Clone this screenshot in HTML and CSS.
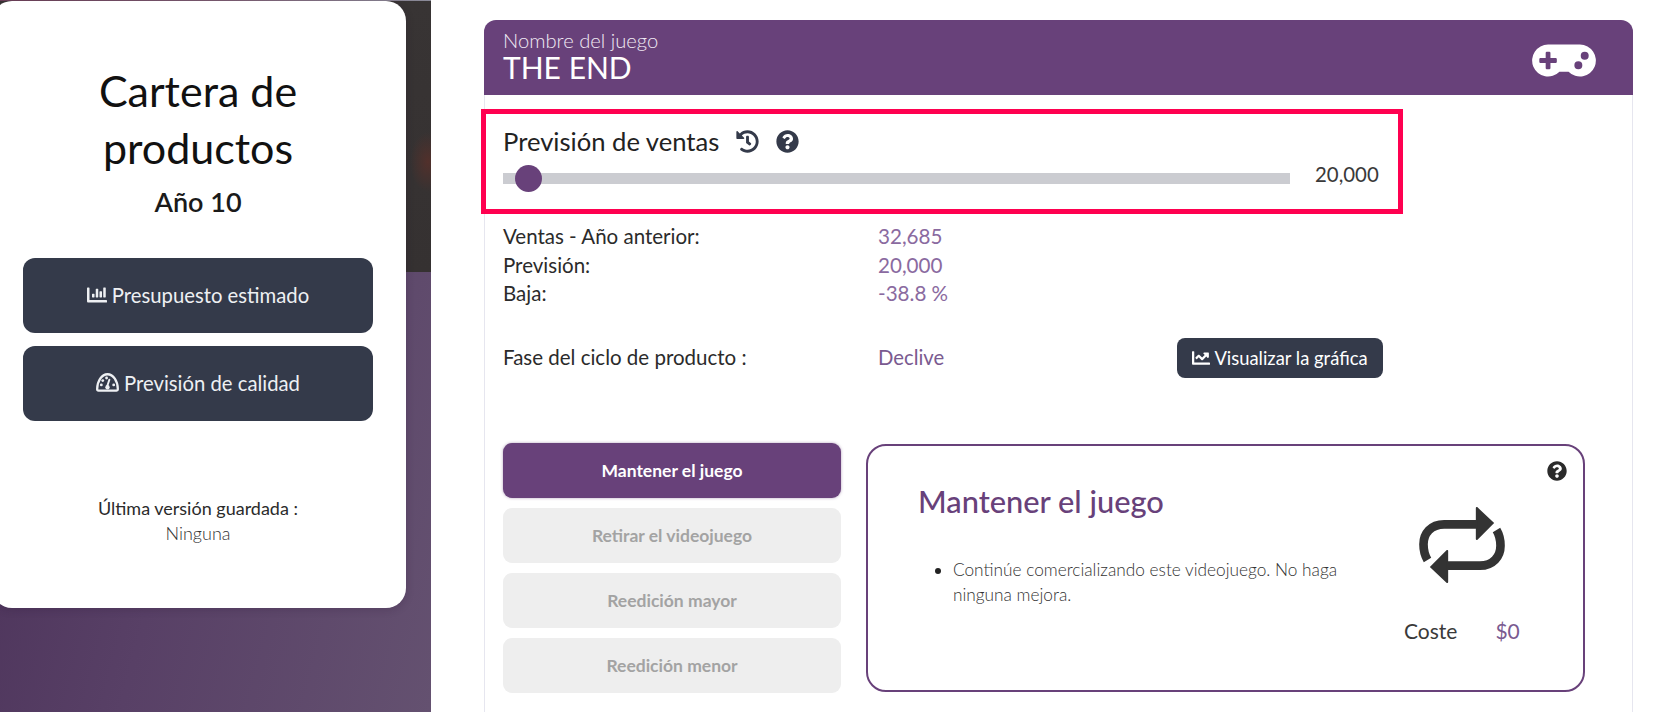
FILE: index.html
```html
<!DOCTYPE html>
<html lang="es">
<head>
<meta charset="utf-8">
<title>Cartera de productos</title>
<link rel="stylesheet" href="styles.css">
</head>
<body>
<div class="page">
  <aside class="side">
    <div class="side-panel">
      <h1 class="side-title">Cartera de productos</h1>
      <div class="side-year">Año 10</div>
      <button class="side-btn">
        <svg class="ico-18" viewBox="0 0 512 512"><path fill="currentColor" d="M332.8 320h38.4c6.4 0 12.8-6.4 12.8-12.8V172.8c0-6.4-6.4-12.8-12.8-12.8h-38.4c-6.4 0-12.8 6.4-12.8 12.8v134.4c0 6.4 6.4 12.8 12.8 12.8zm96 0h38.4c6.4 0 12.8-6.4 12.8-12.8V76.8c0-6.4-6.4-12.8-12.8-12.8h-38.4c-6.4 0-12.8 6.4-12.8 12.8v230.4c0 6.4 6.4 12.8 12.8 12.8zm-288 0h38.4c6.4 0 12.8-6.4 12.8-12.8v-70.4c0-6.4-6.4-12.8-12.8-12.8h-38.4c-6.4 0-12.8 6.4-12.8 12.8v70.4c0 6.4 6.4 12.8 12.8 12.8zm96 0h38.4c6.4 0 12.8-6.4 12.8-12.8V108.8c0-6.4-6.4-12.8-12.8-12.8h-38.4c-6.4 0-12.8 6.4-12.8 12.8v198.4c0 6.4 6.4 12.8 12.8 12.8zM496 384H64V80c0-8.84-7.16-16-16-16H16C7.16 64 0 71.16 0 80v336c0 17.67 14.33 32 32 32h464c8.84 0 16-7.16 16-16v-32c0-8.84-7.16-16-16-16z"/></svg>
        <span>Presupuesto estimado</span>
      </button>
      <button class="side-btn side-btn-next">
        <svg class="ico-gauge" viewBox="0 0 24 20"><path fill="none" stroke="currentColor" stroke-width="2.4" stroke-linejoin="round" d="M2.500 18.500c-1 0-1.400-.5-1.400-1.300C1.100 8.500 6 1.300 12 1.300S22.900 8.500 22.900 17.200c0 .8-.4 1.300-1.400 1.300z"/><path fill="none" stroke="currentColor" stroke-width="2" stroke-linecap="round" d="M11.500 14.500L14 7"/><g fill="currentColor"><circle cx="11" cy="5.300" r="1.500"/><circle cx="7" cy="8" r="1.500"/><circle cx="5.500" cy="12.500" r="1.500"/><circle cx="18.500" cy="12.500" r="1.500"/><circle cx="12" cy="15" r="2.300"/></g></svg>
        <span>Previsión de calidad</span>
      </button>
      <div class="saved-label">Última versión guardada :</div>
      <div class="saved-value">Ninguna</div>
    </div>
  </aside>

  <main class="main">
    <section class="card">
      <header class="card-head">
        <div>
          <div class="head-label">Nombre del juego</div>
          <div class="head-name">THE END</div>
        </div>
        <svg class="ico-pad" viewBox="0 0 640 512"><path fill="#fff" d="M480.07 96H160a160 160 0 1 0 114.24 272h91.52A160 160 0 1 0 480.07 96zM248 268a12 12 0 0 1-12 12h-52v52a12 12 0 0 1-12 12h-24a12 12 0 0 1-12-12v-52H84a12 12 0 0 1-12-12v-24a12 12 0 0 1 12-12h52v-52a12 12 0 0 1 12-12h24a12 12 0 0 1 12 12v52h52a12 12 0 0 1 12 12zm216 76a40 40 0 1 1 40-40 40 40 0 0 1-40 40zm64-96a40 40 0 1 1 40-40 40 40 0 0 1-40 40z"/></svg>
      </header>

      <div class="card-body">
        <div class="forecast">
          <div class="highlight"></div>
          <div class="forecast-title">
            <span>Previsión de ventas</span>
            <svg class="ico-history" viewBox="0 0 512 512"><path fill="#343a4a" d="M504 255.531c.253 136.64-111.18 248.372-247.82 248.468-59.015.042-113.223-20.53-155.822-54.911-11.077-8.94-11.905-25.541-1.839-35.607l11.267-11.267c8.609-8.609 22.353-9.551 31.891-1.984C173.062 425.135 212.781 440 256 440c101.705 0 184-82.311 184-184 0-101.705-82.311-184-184-184-48.814 0-93.149 18.969-126.068 49.932l50.754 50.754c10.08 10.08 2.941 27.314-11.313 27.314H24c-8.837 0-16-7.163-16-16V38.627c0-14.254 17.234-21.393 27.314-11.314l49.372 49.372C129.209 34.136 189.552 8 256 8c136.81 0 247.747 110.78 248 247.531zm-180.912 78.784l9.823-12.63c8.138-10.463 6.253-25.542-4.21-33.679L288 256.349V152c0-13.255-10.745-24-24-24h-16c-13.255 0-24 10.745-24 24v135.651l65.409 50.874c10.463 8.137 25.541 6.253 33.679-4.21z"/></svg>
            <svg class="ico-help" viewBox="0 0 512 512"><path fill="#343a4a" d="M504 256c0 136.997-111.043 248-248 248S8 392.997 8 256C8 119.083 119.043 8 256 8s248 111.083 248 248zM262.655 90c-54.497 0-89.255 22.957-116.549 63.758-3.536 5.286-2.353 12.415 2.715 16.258l34.699 26.31c5.205 3.947 12.621 3.008 16.665-2.122 17.864-22.658 30.113-35.797 57.303-35.797 20.429 0 45.698 13.148 45.698 32.958 0 14.976-12.363 22.667-32.534 33.976C247.128 238.528 216 254.941 216 296v4c0 6.627 5.373 12 12 12h56c6.627 0 12-5.373 12-12v-1.333c0-28.462 83.186-29.647 83.186-106.667 0-58.002-60.165-102-116.531-102zM256 338c-25.365 0-46 20.635-46 46 0 25.364 20.635 46 46 46s46-20.636 46-46c0-25.365-20.635-46-46-46z"/></svg>
          </div>
          <div class="slider-row">
            <div class="track"><div class="thumb"></div></div>
            <div class="slider-value">20,000</div>
          </div>
        </div>

        <div class="stats">
          <div class="stat-label">Ventas - Año anterior:</div><div class="stat-value">32,685</div>
          <div class="stat-label">Previsión:</div><div class="stat-value">20,000</div>
          <div class="stat-label">Baja:</div><div class="stat-value">-38.8 %</div>
        </div>

        <div class="phase">
          <div class="stat-label phase-label">Fase del ciclo de producto :</div>
          <div class="phase-value">Declive</div>
          <button class="chart-btn">
            <svg class="ico-line" viewBox="0 0 512 512"><path fill="currentColor" d="M496 384H64V80c0-8.84-7.16-16-16-16H16C7.16 64 0 71.16 0 80v336c0 17.67 14.33 32 32 32h464c8.84 0 16-7.16 16-16v-32c0-8.84-7.16-16-16-16zM464 96H345.94c-21.38 0-32.09 25.85-16.97 40.97l32.4 32.4L288 242.75l-73.37-73.37c-12.5-12.5-32.76-12.5-45.25 0l-68.69 68.69c-6.25 6.25-6.25 16.38 0 22.63l22.62 22.62c6.25 6.25 16.38 6.25 22.63 0L192 237.25l73.37 73.37c12.5 12.5 32.76 12.5 45.25 0l96-96 32.4 32.4c15.12 15.12 40.97 4.41 40.97-16.97V112c0-8.84-7.16-16-16-16z"/></svg>
            <span>Visualizar la gráfica</span>
          </button>
        </div>

        <div class="decision">
          <div class="options">
            <button class="option option-active">Mantener el juego</button>
            <button class="option">Retirar el videojuego</button>
            <button class="option">Reedición mayor</button>
            <button class="option">Reedición menor</button>
          </div>
          <div class="detail">
            <svg class="ico-detail-help" viewBox="0 0 512 512"><path fill="#2b2b2b" d="M504 256c0 136.997-111.043 248-248 248S8 392.997 8 256C8 119.083 119.043 8 256 8s248 111.083 248 248zM262.655 90c-54.497 0-89.255 22.957-116.549 63.758-3.536 5.286-2.353 12.415 2.715 16.258l34.699 26.31c5.205 3.947 12.621 3.008 16.665-2.122 17.864-22.658 30.113-35.797 57.303-35.797 20.429 0 45.698 13.148 45.698 32.958 0 14.976-12.363 22.667-32.534 33.976C247.128 238.528 216 254.941 216 296v4c0 6.627 5.373 12 12 12h56c6.627 0 12-5.373 12-12v-1.333c0-28.462 83.186-29.647 83.186-106.667 0-58.002-60.165-102-116.531-102zM256 338c-25.365 0-46 20.635-46 46 0 25.364 20.635 46 46 46s46-20.636 46-46c0-25.365-20.635-46-46-46z"/></svg>
            <div class="detail-text">
              <h2 class="detail-title">Mantener el juego</h2>
              <ul class="detail-list">
                <li>Continúe comercializando este videojuego. No haga ninguna mejora.</li>
              </ul>
            </div>
            <div class="detail-side">
              <svg class="ico-repeat" viewBox="0 0 257 228"><g fill="#333"><path d="M170 3c0-3 3-4 5-2l50 47-50 50c-2 2-5 1-5-2z"/><path d="M87 225c0 3-3 4-5 2L32 180l50-50c2-2 5-1 5 2z"/></g><g fill="none" stroke="#333" stroke-width="26"><path d="M175 52H75C35 52 13 80 13 112c0 18 3 32 12 47"/><path d="M82 176H182c40 0 62-28 62-60 0-18-3-32-12-47"/></g></svg>
              <div class="cost"><span>Coste</span><span class="cost-value">$0</span></div>
            </div>
          </div>
        </div>
      </div>
    </section>
  </main>
</div>
</body>
</html>
```
FILE: styles.css
```css
* { box-sizing: border-box; }
html, body { margin: 0; height: 100%; overflow: hidden; background: #fff; }
body { font-family: "Lato", "Noto Sans", sans-serif; color: #2b2b2b; }
button { font-family: inherit; border: 0; cursor: pointer; }
svg { display: block; flex: none; }

.page { display: flex; height: 712px; overflow: hidden; }

.side {
  width: 431px;
  flex: none;
  background:
    linear-gradient(90deg, #6b3f57, #7a5a70 50%, #8a8a98) 0 0 / 100% 1px no-repeat,
    radial-gradient(ellipse 18px 30px at 428px 162px, #52302b, rgba(60,50,50,0) 100%) 0 0 / 100% 272px no-repeat,
    linear-gradient(#383434, #353131) 0 0 / 100% 272px no-repeat,
    linear-gradient(105deg, #4b3259 10%, #584066 50%, #645170 100%);
}
.side-panel {
  width: 414px;
  height: 607px;
  margin: 1px 0 0 -8px;
  padding: 60.5px 33px 0 31px;
  background: #fff;
  border-radius: 20px;
  text-align: center;
  box-shadow: 0 2px 8px rgba(40, 20, 50, .2);
}
.side-title { margin: 0; font-size: 43px; line-height: 57px; font-weight: 400; color: #111; }
.side-year { margin-top: 8.5px; font-size: 27px; line-height: 36px; font-weight: 600; color: #1a1a1a; }
.side-btn {
  display: flex; align-items: center; justify-content: center; gap: 5px;
  width: 350px; height: 75px; margin-top: 37.5px;
  padding-bottom: 2px;
  background: #343a4a; color: #eef0f3;
  border-radius: 12px;
  font-size: 20.3px;
}
.side-btn-next { margin-top: 13px; }
.ico-18 { width: 20px; height: 20px; }
.ico-gauge { width: 23px; height: 19px; }
.saved-label { margin-top: 75.5px; font-size: 18px; line-height: 25px; color: #2b2b2b; }
.saved-value { font-size: 18px; line-height: 25px; font-weight: 300; color: #333; }

.main { flex: 1; padding: 20px 32px 0 53px; }
.card {
  width: 1149px; height: 692px;
  border: 1px solid #e6e6ef;
  border-top: 0; border-bottom: 0;
  border-radius: 12px 12px 0 0;
}
.card-head {
  display: flex; align-items: center; justify-content: space-between;
  height: 75px; margin: 0 -1px;
  padding: 1px 37px 5px 19px;
  background: #68417a; color: #fff;
  border-radius: 12px 12px 0 0;
}
.head-label { font-size: 20.2px; line-height: 22px; font-weight: 300; color: #f0eaf4; }
.head-name { font-size: 30px; line-height: 32px; font-weight: 400; }
.ico-pad { width: 64px; height: 51px; margin-top: 9px; }

.card-body { padding: 31px 0 0 18px; }
.forecast { position: relative; }
.highlight {
  position: absolute; top: -17px; left: -22px;
  width: 922px; height: 105px;
  border: 5px solid #ff0050;
  pointer-events: none;
}
.forecast-title { display: flex; align-items: center; height: 30px; font-size: 25.6px; color: #222; }
.ico-history { width: 23px; height: 23px; margin-left: 17px; }
.ico-help { width: 23px; height: 23px; margin-left: 17px; }
.slider-row { display: flex; margin-top: 9px; height: 27px; }
.track { position: relative; width: 787px; height: 11px; margin-top: 8px; background: #cbccd1; }
.thumb {
  position: absolute; top: -8px; left: 12px;
  width: 27px; height: 27px;
  border-radius: 50%; background: #68417a;
}
.slider-value { margin: -6px 0 0 25px; font-size: 20.4px; line-height: 30px; color: #3a3a3a; }

.stats {
  display: grid; grid-template-columns: 375px 1fr;
  grid-auto-rows: 28.5px; align-items: center;
  margin-top: 30px;
}
.stat-label { color: #2b2b2b; font-size: 20.5px; }
.stat-value { color: #8a6aa0; font-size: 20.6px; }
.phase { display: flex; align-items: center; margin-top: 30.5px; height: 40px; }
.phase-label { width: 375px; padding-bottom: 3px; }
.phase-value { width: 299px; padding-bottom: 3px; font-size: 20.3px; color: #7a5a90; }
.chart-btn {
  display: flex; align-items: center; justify-content: center; gap: 4px;
  width: 206px; height: 40px;
  background: #343a4a; color: #fff; border-radius: 8px; font-size: 18.4px;
}
.ico-line { width: 18px; height: 18px; }

.decision { display: flex; gap: 25px; margin-top: 65px; }
.options { display: flex; flex-direction: column; gap: 10px; width: 338px; flex: none; }
.option {
  height: 55px; border-radius: 9px;
  background: #eee; color: #a3a3a3;
  font-size: 17.5px; font-weight: 700;
}
.option-active { background: #68417a; color: #fff; box-shadow: 0 0 3px rgba(104, 65, 122, .5); }

.detail {
  position: relative; display: flex;
  width: 719px; height: 248px; margin-top: 1px;
  padding: 0 0 0 50px;
  border: 2px solid #68417a; border-radius: 20px;
}
.ico-detail-help { position: absolute; top: 15px; right: 16px; width: 20px; height: 20px; }
.detail-text { width: 420px; flex: none; padding-top: 36px; }
.detail-title { margin: 0; font-size: 30.8px; line-height: 40px; font-weight: 500; color: #68417a; }
.detail-list { margin: 35px 0 0; padding-left: 35px; font-size: 17.25px; line-height: 25px; font-weight: 300; color: #333; }
.detail-list li::marker { color: #222; }
.detail-side { margin-left: 66px; padding-top: 61px; }
.ico-repeat { width: 86px; height: 76px; margin-left: 15px; }
.cost { display: flex; gap: 38px; margin-top: 33px; font-size: 21px; line-height: 30px; color: #3a3a3a; }
.cost-value { color: #7a5a90; }
```
